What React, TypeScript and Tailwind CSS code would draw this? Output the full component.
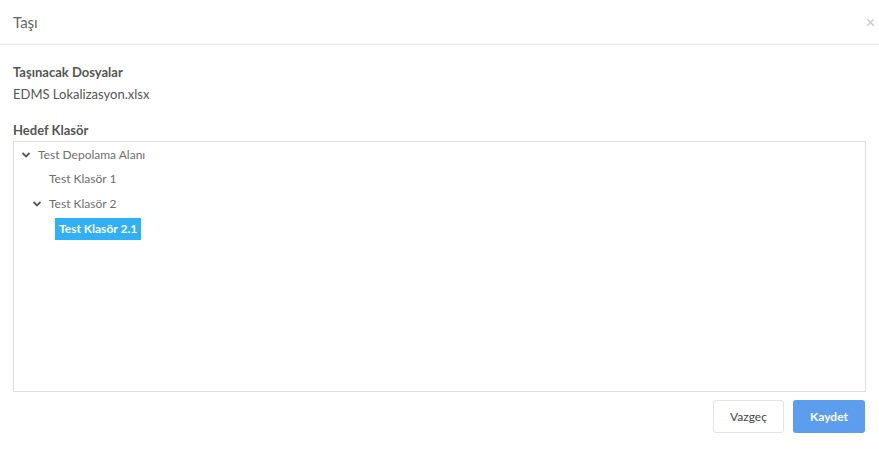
import { X } from 'lucide-react';

function Chevron() {
  return (
    <svg width="8" height="6" viewBox="0 0 8 6" className="shrink-0">
      <path d="M0.5 1 L4 4.5 L7.5 1" fill="none" stroke="#555" strokeWidth="1.8" />
    </svg>
  );
}

export default function App() {
  return (
    <div className="w-[879px] h-[455px] bg-white text-[#555] font-['Lato','Open_Sans',sans-serif] text-[13px]">
      {/* Header */}
      <div className="h-[45px] flex items-center justify-between pl-[13px] pr-[3px] border-b border-[#e5e5e5]">
        <span className="text-[15px] text-[#666]">Taşı</span>
        <X className="w-[11px] h-[11px] text-[#c8c8c8]" strokeWidth={3} />
      </div>

      {/* Body */}
      <div className="px-[13px] pt-[18px]">
        <div className="font-bold leading-[18px]">Taşınacak Dosyalar</div>
        <div className="leading-[18px] mt-[4px]">EDMS Lokalizasyon.xlsx</div>

        <div className="font-bold leading-[18px] mt-[18px]">Hedef Klasör</div>
        <div className="w-[853px] h-[251px] border border-[#dedede] mt-[2px] text-[12px] text-[#6e6e6e]">
          <div className="h-[25px] flex items-center gap-[8px] pl-[8px]">
            <Chevron />
            <span>Test Depolama Alanı</span>
          </div>
          <div className="h-[24px] flex items-center pl-[35px]">
            <span>Test Klasör 1</span>
          </div>
          <div className="h-[25px] flex items-center gap-[8px] pl-[19px]">
            <Chevron />
            <span>Test Klasör 2</span>
          </div>
          <div className="h-[25px] flex items-center pl-[41px]">
            <span className="bg-[#32b0f5] text-white font-bold px-[4px] h-[22px] flex items-center">
              Test Klasör 2.1
            </span>
          </div>
        </div>

        {/* Footer */}
        <div className="flex justify-end gap-[9px] mt-[8px] pr-[1px]">
          <button className="w-[71px] h-[33px] border border-[#e3e3e3] rounded-[3px] bg-white text-[#444] text-[12px]">
            Vazgeç
          </button>
          <button className="w-[72px] h-[33px] rounded-[3px] bg-[#5d9ded] text-white font-bold text-[12px]">
            Kaydet
          </button>
        </div>
      </div>
    </div>
  );
}
